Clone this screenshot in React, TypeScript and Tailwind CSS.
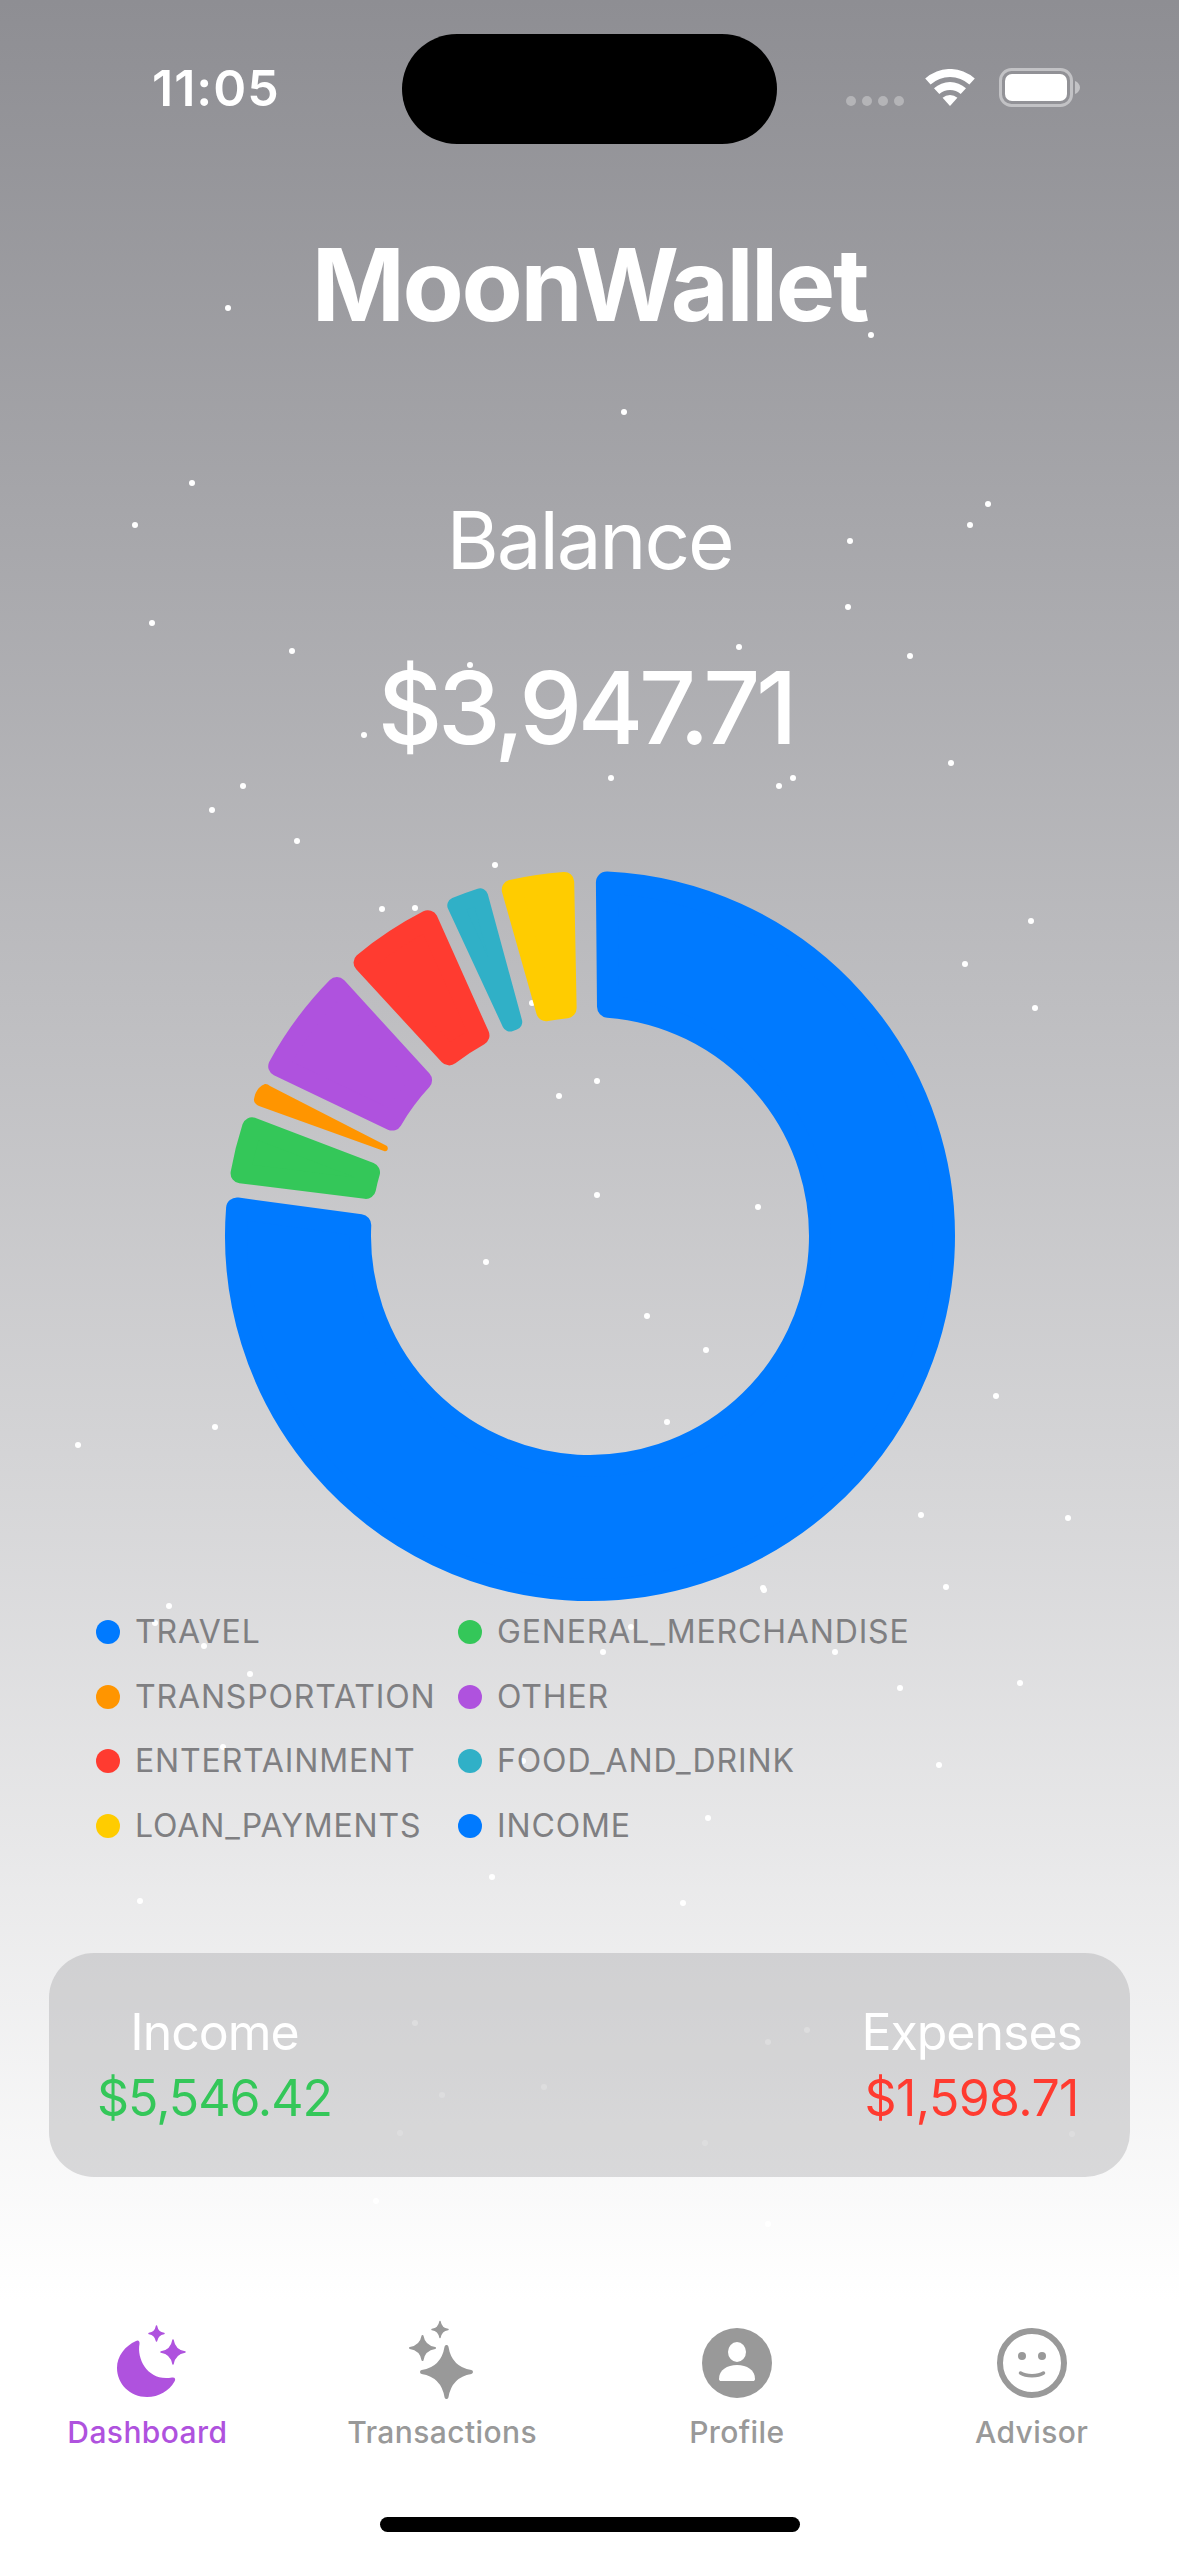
const stars = [
  [228, 308], [871, 335], [624, 412], [192, 483], [135, 525], [988, 504], [970, 525], [850, 541],
  [152, 623], [848, 607], [292, 651], [910, 656], [739, 647], [470, 665], [364, 735], [951, 763],
  [793, 778], [779, 786], [611, 778], [243, 786], [212, 810], [297, 841], [495, 865], [382, 909],
  [415, 908], [1031, 921], [965, 964], [1035, 1008], [532, 1003], [559, 1096], [597, 1081], [597, 1195],
  [758, 1207], [486, 1262], [647, 1316], [706, 1350], [996, 1396], [667, 1422], [215, 1427], [78, 1445],
  [921, 1515], [1068, 1518], [946, 1587], [763, 1588], [764, 1590], [169, 1606], [155, 1623], [204, 1646],
  [250, 1674], [631, 1627], [603, 1652], [835, 1652], [900, 1688], [1020, 1683], [223, 1747], [523, 1761],
  [939, 1765], [708, 1818], [492, 1877], [140, 1901], [683, 1903], [415, 2023], [807, 2030], [768, 2042],
  [544, 2087], [442, 2095], [400, 2133], [705, 2143], [1072, 2134], [376, 2201], [768, 2224],
];

const OUTER = 365;
const INNER = 219;
const GAP = 9;

// angles are clockwise from 12 o'clock
const slices = [
  { color: "#007aff", from: -0.5, to: 277.7, r: 11 },
  { color: "#34c759", from: 277.1, to: 290.9, r: 10 },
  { color: "#af52de", from: 295.5, to: 317.6, r: 10 },
  { color: "#ff3b30", from: 317.3, to: 335.9, r: 10 },
  { color: "#30b0c7", from: 335.1, to: 344.8, r: 8 },
  { color: "#ffcc00", from: 344.2, to: 358.9, r: 10 },
];

function polar(radius: number, deg: number) {
  const a = (deg * Math.PI) / 180;
  return `${(radius * Math.sin(a)).toFixed(2)} ${(-radius * Math.cos(a)).toFixed(2)}`;
}

function slicePath(from: number, to: number, r: number) {
  const ro = OUTER - r;
  const ri = INNER + r;
  const d = GAP + r;
  const oo = (Math.asin(d / ro) * 180) / Math.PI;
  const oi = (Math.asin(d / ri) * 180) / Math.PI;
  const large = to - from > 180 ? 1 : 0;
  return `M${polar(ro, from + oo)} A${ro} ${ro} 0 ${large} 1 ${polar(ro, to - oo)} L${polar(ri, to - oi)} A${ri} ${ri} 0 ${large} 0 ${polar(ri, from + oi)} Z`;
}

function Donut() {
  return (
    <svg viewBox="-366 -366 732 732" className="w-[732px] h-[732px] mx-auto mt-[102px] block">
      {slices.map((s) => (
        <path
          key={s.color + s.from}
          d={slicePath(s.from, s.to, s.r)}
          fill={s.color}
          stroke={s.color}
          strokeWidth={s.r * 2}
          strokeLinejoin="round"
        />
      ))}
      <path
        d="M-326 -151.5 C-332 -149 -335 -143 -336 -137 C-336.5 -133 -333 -131 -331 -130 L-206 -85 C-203 -84 -201 -87 -203 -90 L-320 -150 C-322 -151.5 -324 -152.5 -326 -151.5 Z"
        fill="#ff9500"
      />
    </svg>
  );
}

const legend = [
  ["TRAVEL", "bg-[#007aff]"],
  ["GENERAL_MERCHANDISE", "bg-[#34c759]"],
  ["TRANSPORTATION", "bg-[#ff9500]"],
  ["OTHER", "bg-[#af52de]"],
  ["ENTERTAINMENT", "bg-[#ff3b30]"],
  ["FOOD_AND_DRINK", "bg-[#30b0c7]"],
  ["LOAN_PAYMENTS", "bg-[#ffcc00]"],
  ["INCOME", "bg-[#007aff]"],
];

function spark(cx: number, cy: number, rx: number, ry: number) {
  const kx = rx * 0.14;
  const ky = ry * 0.14;
  return `M${cx} ${cy - ry} Q${cx + kx} ${cy - ky} ${cx + rx} ${cy} Q${cx + kx} ${cy + ky} ${cx} ${cy + ry} Q${cx - kx} ${cy + ky} ${cx - rx} ${cy} Q${cx - kx} ${cy - ky} ${cx} ${cy - ry} Z`;
}

function MoonIcon() {
  return (
    <svg viewBox="0 0 100 80" className="w-[100px] h-[80px]" fill="#af52de" stroke="#af52de" strokeLinejoin="round">
      <path
        strokeWidth="0"
        d="M39 21 C41 19.5 43 21 42.5 24 C39.5 40 52 62 75 57.5 C78 57 79 59 77.5 61.5 C72 71 62 77 50 77 C33 77 20 64 20 48 C20 36 28 26 39 21 Z"
      />
      <path strokeWidth="1.5" d={spark(59.5, 13.5, 7.5, 7.5)} />
      <path strokeWidth="1.5" d={spark(76, 32, 12, 12)} />
    </svg>
  );
}

function SparklesIcon() {
  return (
    <svg viewBox="0 0 100 80" className="w-[100px] h-[80px]" fill="#999999" stroke="#999999" strokeLinejoin="round">
      <path strokeWidth="4" d={spark(54.5, 52, 24.5, 25)} />
      <path strokeWidth="2" d={spark(30.5, 28, 12.5, 12)} />
      <path strokeWidth="1.5" d={spark(48, 9.5, 8, 8)} />
    </svg>
  );
}

function ProfileIcon() {
  return (
    <svg viewBox="0 0 100 80" className="w-[100px] h-[80px]">
      <circle cx="50" cy="43" r="35" fill="#999999" />
      <ellipse cx="50" cy="32" rx="9" ry="10" fill="#ffffff" />
      <path d="M32 59 C32 50 40 45 50 45 C60 45 68 50 68 59 C68 60.5 67 61 66 61 L34 61 C33 61 32 60.5 32 59 Z" fill="#ffffff" />
    </svg>
  );
}

function SmileIcon() {
  return (
    <svg viewBox="0 0 100 80" className="w-[100px] h-[80px]">
      <circle cx="50" cy="43" r="32" fill="none" stroke="#999999" strokeWidth="6" />
      <circle cx="40" cy="36" r="4" fill="#999999" />
      <circle cx="60" cy="36" r="4" fill="#999999" />
      <path d="M38.5 53 C44 56.5 56 56.5 61.5 53" fill="none" stroke="#999999" strokeWidth="3.5" strokeLinecap="round" />
    </svg>
  );
}

const tabs = [
  { label: "Dashboard", icon: <MoonIcon />, active: true },
  { label: "Transactions", icon: <SparklesIcon />, active: false },
  { label: "Profile", icon: <ProfileIcon />, active: false },
  { label: "Advisor", icon: <SmileIcon />, active: false },
];

function StatusBar() {
  return (
    <div className="grid grid-cols-[402px_375px_1fr] pt-[34px] relative">
      <div className="pl-[152px] pt-[26px] text-[50px] leading-[56px] font-semibold text-white tracking-[1px]">11:05</div>
      <div className="h-[110px] rounded-[55px] bg-black" />
      <div className="pl-[69px] pt-[35px] flex items-end h-[72px]">
        <div className="flex gap-[6px]">
          <span className="w-[10px] h-[10px] rounded-full bg-[#b4b4b7]" />
          <span className="w-[10px] h-[10px] rounded-full bg-[#b4b4b7]" />
          <span className="w-[10px] h-[10px] rounded-full bg-[#b4b4b7]" />
          <span className="w-[10px] h-[10px] rounded-full bg-[#b4b4b7]" />
        </div>
        <svg viewBox="0 0 50 37" className="w-[50px] h-[37px] ml-[21px]" fill="#ffffff">
          <path d="M0.2 9.5 A37 37 0 0 1 49.8 9.5 L44.4 15.5 A29 29 0 0 0 5.6 15.5 Z" />
          <path d="M9 19.2 A24 24 0 0 1 41 19.2 L35.7 25.1 A16 16 0 0 0 14.3 25.1 Z" />
          <path d="M25 37 L17.6 28.8 A11 11 0 0 1 32.4 28.8 Z" />
        </svg>
        <svg viewBox="0 0 81 39" className="w-[81px] h-[39px] ml-[24px] mb-[-1px]">
          <rect x="1.5" y="1.5" width="71" height="36" rx="11" fill="none" stroke="#c2c2c5" strokeWidth="3" />
          <rect x="6" y="6" width="62" height="27" rx="7" fill="#ffffff" />
          <path d="M76 13 C79 14 81 17 81 19.5 C81 22 79 25 76 26 Z" fill="#c2c2c5" />
        </svg>
      </div>
    </div>
  );
}

export default function App() {
  return (
    <div className="w-[1179px] h-[2556px] flex flex-col overflow-hidden font-['Inter',sans-serif]">
      <main className="relative h-[2300px] bg-linear-to-b from-[#8e8e93] to-white">
        {stars.map(([x, y]) => (
          <span
            key={`${x}-${y}`}
            className="absolute w-[6px] h-[6px] rounded-full bg-white"
            style={{ left: x - 3, top: y - 3 }}
          />
        ))}
        <div className="relative">
          <StatusBar />
          <h1 className="mt-[81px] text-center text-[100px] leading-[120px] font-bold tracking-[-2.4px] text-white">MoonWallet</h1>
          <p className="mt-[145px] text-center text-[80px] leading-[100px] font-normal tracking-[-2.2px] text-white">Balance</p>
          <p className="mt-[58px] pr-[8px] text-center text-[100px] leading-[120px] font-medium tracking-[-4.4px] text-white">$3,947.71</p>
          <Donut />
          <div className="mt-[10px] pl-[96px] grid grid-cols-[362px_1fr] gap-y-[24.7px]">
            {legend.map(([name, dot]) => (
              <div key={name} className="flex items-center gap-[15px] h-[40px]">
                <span className={`w-[24px] h-[24px] rounded-full ${dot}`} />
                <span className="text-[32px] leading-[40px] font-normal tracking-[0.85px] text-[#7f7f82]">{name}</span>
              </div>
            ))}
          </div>
          <div className="mt-[107px] mx-[49px] h-[224px] rounded-[45px] bg-[#8e8e93]/30 flex justify-between items-center px-[48px]">
            <div className="flex flex-col items-center">
              <span className="text-[50px] leading-[66px] font-normal tracking-[-1px] text-white">Income</span>
              <span className="text-[50px] leading-[66px] font-normal tracking-[-1px] text-[#34c759]">$5,546.42</span>
            </div>
            <div className="flex flex-col items-center">
              <span className="text-[50px] leading-[66px] font-normal tracking-[-1px] text-white">Expenses</span>
              <span className="text-[50px] leading-[66px] font-normal tracking-[-0.6px] text-[#ff3b30]">$1,598.71</span>
            </div>
          </div>
        </div>
      </main>
      <nav className="relative flex-1 bg-white">
        <div className="grid grid-cols-4 pt-[20px]">
          {tabs.map((t) => (
            <div key={t.label} className="flex flex-col items-center">
              {t.icon}
              <span className={`mt-[12px] text-[30px] leading-[40px] font-medium tracking-[0.4px] ${t.active ? "text-[#af52de]" : "text-[#999999]"}`}>
                {t.label}
              </span>
            </div>
          ))}
        </div>
        <div className="mt-[65px] mx-auto w-[420px] h-[15px] rounded-full bg-black" />
      </nav>
    </div>
  );
}
